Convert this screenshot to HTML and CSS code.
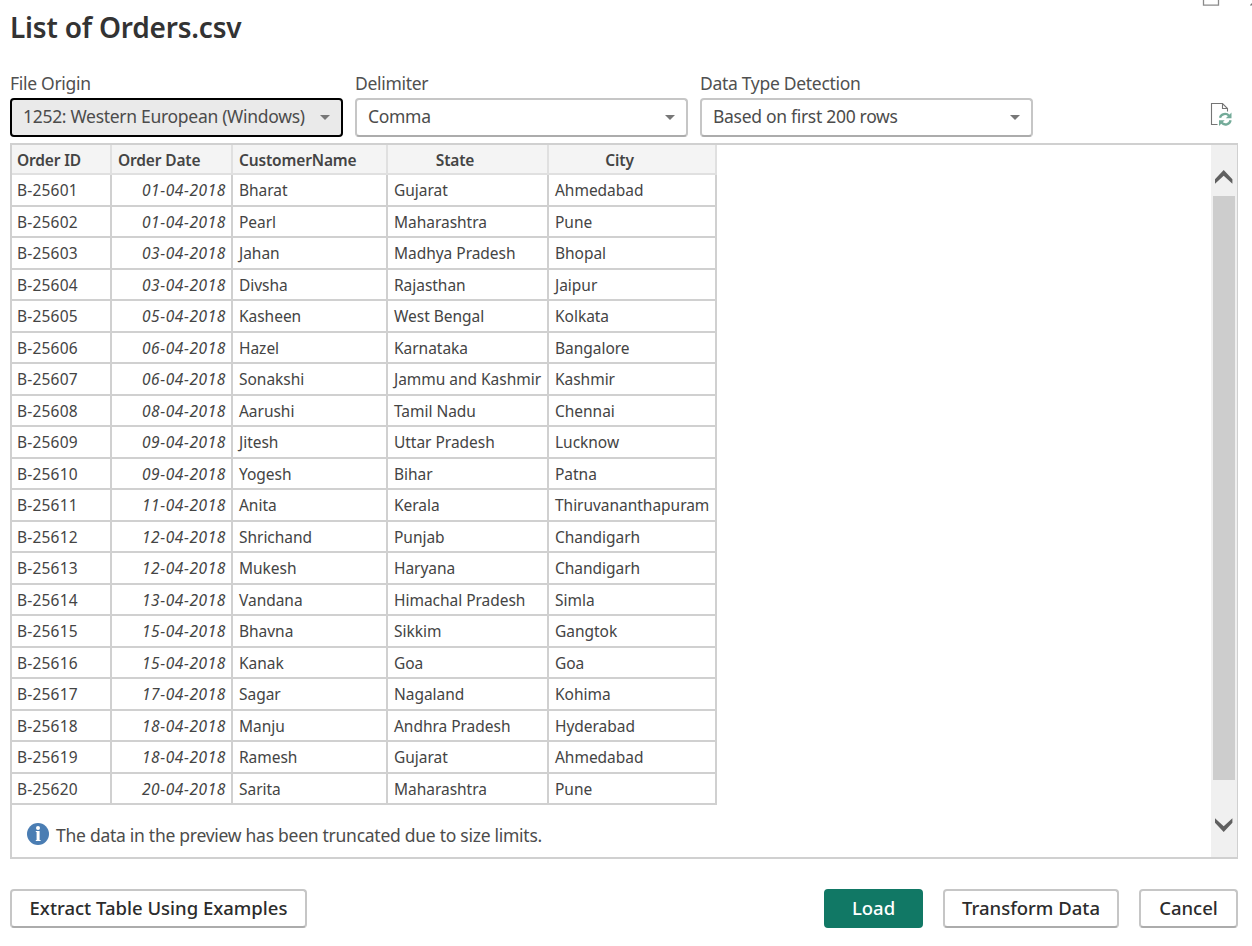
FILE: index.html
```html
<!DOCTYPE html>
<html lang="en">
<head>
<meta charset="utf-8">
<title>List of Orders.csv</title>
<link rel="stylesheet" href="styles.css">
</head>
<body>
<main class="dialog">
  <svg class="window-controls" width="60" height="8" viewBox="0 0 60 8"><path d="M11.5 0V5.2H26.5V0" fill="none" stroke="#8a8a8a" stroke-width="1.3"/><path d="M58.5 5.5L61 3" stroke="#777" stroke-width="1.3"/></svg>
  <h1 class="title">List of Orders.csv</h1>
  <section class="options">
    <div class="field"><div class="label">File Origin</div><div class="select focused"><span class="value">1252: Western European (Windows)</span><i class="caret"></i></div></div>
    <div class="field"><div class="label">Delimiter</div><div class="select"><span class="value">Comma</span><i class="caret"></i></div></div>
    <div class="field"><div class="label">Data Type Detection</div><div class="select"><span class="value">Based on first 200 rows</span><i class="caret"></i></div></div>
    <svg class="refresh" width="24" height="26" viewBox="0 0 24 26" fill="none"><path d="M8.5 22.5H2.5V1.5H13.5L18.5 6.5V9.5" stroke="#757575" stroke-width="1.1"/><path d="M13.5 1.5V6.5H18.5" stroke="#757575" stroke-width="1.1"/><path d="M11 15.8A5.2 5.2 0 0 1 20 13.8M21.6 18.2A5.2 5.2 0 0 1 12.5 20.6" stroke="#74ab99" stroke-width="2.3"/><path d="M22.5 10.5V16.3H16.8ZM10 24V18.2H15.7Z" fill="#74ab99"/></svg>
  </section>
  <section class="preview">
    <div class="content">
      <table class="grid">
        <colgroup><col class="c1"><col class="c2"><col class="c3"><col class="c4"><col class="c5"></colgroup>
        <thead><tr><th>Order ID</th><th>Order Date</th><th>CustomerName</th><th class="mid">State</th><th class="mid">City</th></tr></thead>
        <tbody>
          <tr><td>B-25601</td><td>01-04-2018</td><td>Bharat</td><td>Gujarat</td><td>Ahmedabad</td></tr>
          <tr><td>B-25602</td><td>01-04-2018</td><td>Pearl</td><td>Maharashtra</td><td>Pune</td></tr>
          <tr><td>B-25603</td><td>03-04-2018</td><td>Jahan</td><td>Madhya Pradesh</td><td>Bhopal</td></tr>
          <tr><td>B-25604</td><td>03-04-2018</td><td>Divsha</td><td>Rajasthan</td><td>Jaipur</td></tr>
          <tr><td>B-25605</td><td>05-04-2018</td><td>Kasheen</td><td>West Bengal</td><td>Kolkata</td></tr>
          <tr><td>B-25606</td><td>06-04-2018</td><td>Hazel</td><td>Karnataka</td><td>Bangalore</td></tr>
          <tr><td>B-25607</td><td>06-04-2018</td><td>Sonakshi</td><td>Jammu and Kashmir</td><td>Kashmir</td></tr>
          <tr><td>B-25608</td><td>08-04-2018</td><td>Aarushi</td><td>Tamil Nadu</td><td>Chennai</td></tr>
          <tr><td>B-25609</td><td>09-04-2018</td><td>Jitesh</td><td>Uttar Pradesh</td><td>Lucknow</td></tr>
          <tr><td>B-25610</td><td>09-04-2018</td><td>Yogesh</td><td>Bihar</td><td>Patna</td></tr>
          <tr><td>B-25611</td><td>11-04-2018</td><td>Anita</td><td>Kerala</td><td>Thiruvananthapuram</td></tr>
          <tr><td>B-25612</td><td>12-04-2018</td><td>Shrichand</td><td>Punjab</td><td>Chandigarh</td></tr>
          <tr><td>B-25613</td><td>12-04-2018</td><td>Mukesh</td><td>Haryana</td><td>Chandigarh</td></tr>
          <tr><td>B-25614</td><td>13-04-2018</td><td>Vandana</td><td>Himachal Pradesh</td><td>Simla</td></tr>
          <tr><td>B-25615</td><td>15-04-2018</td><td>Bhavna</td><td>Sikkim</td><td>Gangtok</td></tr>
          <tr><td>B-25616</td><td>15-04-2018</td><td>Kanak</td><td>Goa</td><td>Goa</td></tr>
          <tr><td>B-25617</td><td>17-04-2018</td><td>Sagar</td><td>Nagaland</td><td>Kohima</td></tr>
          <tr><td>B-25618</td><td>18-04-2018</td><td>Manju</td><td>Andhra Pradesh</td><td>Hyderabad</td></tr>
          <tr><td>B-25619</td><td>18-04-2018</td><td>Ramesh</td><td>Gujarat</td><td>Ahmedabad</td></tr>
          <tr><td>B-25620</td><td>20-04-2018</td><td>Sarita</td><td>Maharashtra</td><td>Pune</td></tr>
        </tbody>
      </table>
      <div class="notice">
        <svg class="info" width="22" height="22" viewBox="0 0 22 22"><circle cx="11" cy="11" r="11" fill="#4a7db3"/><circle cx="11" cy="5" r="2" fill="#fff"/><path d="M8.8 8H12.6V17H13.6V18H8.8V17H9.6V9H8.8Z" fill="#fff"/></svg>
        <span class="message">The data in the preview has been truncated due to size limits.</span>
      </div>
    </div>
    <div class="scrollbar">
      <svg class="arrow" width="18" height="14" viewBox="0 0 18 14"><path d="M0 9.3L8.7 0L17.4 9.3V13.8L8.7 5.7L0 13.8Z" fill="#606060"/></svg>
      <div class="thumb"></div>
      <svg class="arrow" width="18" height="14" viewBox="0 0 18 14"><path d="M0 .2L8.7 8.3L17.4 .2V4.7L8.7 14L0 4.7Z" fill="#606060"/></svg>
    </div>
  </section>
  <footer class="actions">
    <button class="btn extract"><span>Extract Table Using Examples</span></button>
    <div class="spacer"></div>
    <button class="btn load"><span>Load</span></button>
    <button class="btn transform"><span>Transform Data</span></button>
    <button class="btn cancel"><span>Cancel</span></button>
  </footer>
</main>
</body>
</html>
```
FILE: styles.css
```css
* { box-sizing: border-box; }
body { margin: 0; background: #fff; color: #444; font-family: "Noto Sans", "Open Sans", sans-serif; overflow: hidden; }
.dialog { position: relative; width: 1252px; height: 946px; padding: 8px 14px 0 10px; display: flex; flex-direction: column; }
.window-controls { position: absolute; right: 0; top: 0; }
.title { margin: 0; height: 65px; font-size: 28px; line-height: 39px; font-weight: 600; color: #333; letter-spacing: -0.2px; white-space: nowrap; }
.options { display: flex; gap: 12px; height: 70px; }
.field { width: 333px; white-space: nowrap; }
.label { height: 25px; line-height: 20px; font-size: 17.5px; color: #505050; letter-spacing: -0.3px; }
.select { height: 39px; display: flex; align-items: center; justify-content: space-between; padding: 0 11px 3px 11px; border: 2px solid #c6c6c6; border-bottom-color: #acacac; border-radius: 4px; font-size: 17.5px; color: #4c4c4c; }
.select.focused { border-color: #000; background: #eaeaea; }
.value { letter-spacing: -0.3px; }
.caret { width: 10px; height: 5px; margin-top: 3px; background: #777; clip-path: polygon(0 0, 100% 0, 50% 100%); }
.refresh { margin: 29px 5px 0 auto; }
.preview { height: 716px; display: flex; border: 2px solid #d0d0d0; border-right-width: 1px; }
.content { flex: 1; }
.grid { width: 705px; table-layout: fixed; border-collapse: separate; border-spacing: 0; font-size: 15.5px; line-height: 20px; white-space: nowrap; }
.c1 { width: 100px; } .c2 { width: 121px; } .c3 { width: 155px; } .c4 { width: 161px; } .c5 { width: 168px; }
.grid th { height: 30px; padding: 1px 0 0 6px; background: #f4f4f4; border: solid #e0e0e0; border-width: 0 2px 2px 0; text-align: left; font-weight: 600; letter-spacing: -0.15px; }
.grid .mid { text-align: center; padding: 1px 30px 0 5px; }
.grid td { height: 32px; padding: 0 0 0 6px; border: solid #d0d0d0; border-width: 0 2px 2px 0; letter-spacing: -0.03px; }
.grid th:first-child, .grid td:first-child { padding-left: 5px; }
.grid td:first-child { letter-spacing: 0.2px; }
.grid tr:nth-child(even) td { height: 31px; padding-top: 1px; }
.grid td:nth-child(2) { text-align: right; font-style: italic; padding-right: 5px; letter-spacing: 0.6px; }
.notice { display: flex; align-items: center; gap: 7px; height: 52px; padding: 8px 0 0 15px; font-size: 17.5px; color: #4c4c4c; }
.info { margin-bottom: 2px; }
.message { letter-spacing: -0.27px; }
.scrollbar { width: 26px; background: #f0f0f0; display: flex; flex-direction: column; align-items: center; padding: 25px 0 25px; }
.thumb { width: 22px; height: 584px; margin: 12px 0 38px; background: #cdcdcd; }
.arrow { display: block; flex: none; }
.actions { display: flex; margin-top: 30px; }
.spacer { flex: 1; }
.btn { height: 39px; padding: 0 0 2px; border: 2px solid #c6c6c6; border-bottom-color: #acacac; border-radius: 4px; background: #fff; color: #2c2c2c; font: 500 18.5px "Noto Sans", sans-serif; white-space: nowrap; }
.extract { width: 297px; }
.load { width: 99px; margin-right: 20px; background: #117865; border-color: #117865; color: #fff; }
.transform { width: 176px; margin-right: 20px; }
.cancel { width: 99px; }
```
